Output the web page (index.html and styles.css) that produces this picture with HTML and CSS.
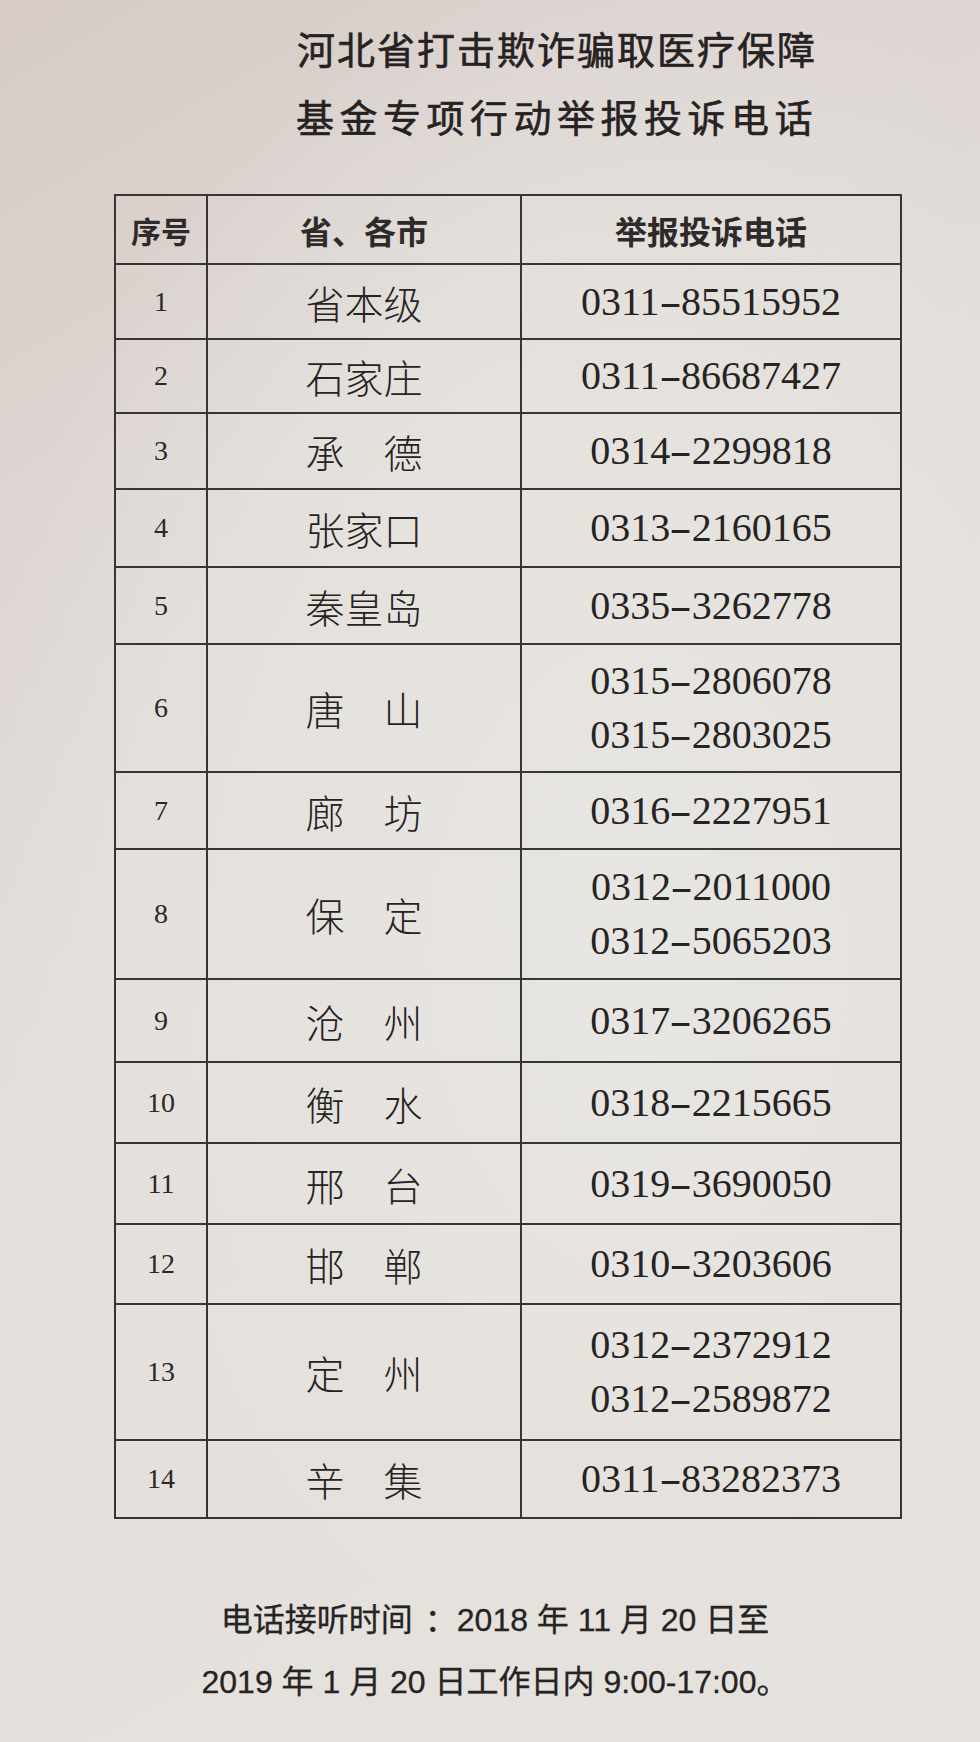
FILE: index.html
```html
<!DOCTYPE html>
<html lang="zh-CN">
<head>
<meta charset="utf-8">
<title>河北省打击欺诈骗取医疗保障基金专项行动举报投诉电话</title>
<link rel="stylesheet" href="styles.css">
</head>
<body>
<div class="page">
  <header class="title">
    <div class="title-line l1">河北省打击欺诈骗取医疗保障</div>
    <div class="title-line l2">基金专项行动举报投诉电话</div>
  </header>

  <table class="sheet">
    <colgroup>
      <col class="c-no">
      <col class="c-city">
      <col class="c-tel">
    </colgroup>
    <thead>
      <tr class="head">
        <th class="h-no">序号</th>
        <th>省、各市</th>
        <th>举报投诉电话</th>
      </tr>
    </thead>
    <tbody>
      <tr><td class="no">1</td><td class="city">省本级</td><td class="tel">0311<span class="dash">-</span>85515952</td></tr>
      <tr><td class="no">2</td><td class="city">石家庄</td><td class="tel">0311<span class="dash">-</span>86687427</td></tr>
      <tr><td class="no">3</td><td class="city">承　德</td><td class="tel">0314<span class="dash">-</span>2299818</td></tr>
      <tr><td class="no">4</td><td class="city">张家口</td><td class="tel">0313<span class="dash">-</span>2160165</td></tr>
      <tr><td class="no">5</td><td class="city">秦皇岛</td><td class="tel">0335<span class="dash">-</span>3262778</td></tr>
      <tr><td class="no">6</td><td class="city">唐　山</td><td class="tel">0315<span class="dash">-</span>2806078<br>0315<span class="dash">-</span>2803025</td></tr>
      <tr><td class="no">7</td><td class="city">廊　坊</td><td class="tel">0316<span class="dash">-</span>2227951</td></tr>
      <tr><td class="no">8</td><td class="city">保　定</td><td class="tel">0312<span class="dash">-</span>2011000<br>0312<span class="dash">-</span>5065203</td></tr>
      <tr><td class="no">9</td><td class="city">沧　州</td><td class="tel">0317<span class="dash">-</span>3206265</td></tr>
      <tr><td class="no">10</td><td class="city">衡　水</td><td class="tel">0318<span class="dash">-</span>2215665</td></tr>
      <tr><td class="no">11</td><td class="city">邢　台</td><td class="tel">0319<span class="dash">-</span>3690050</td></tr>
      <tr><td class="no">12</td><td class="city">邯　郸</td><td class="tel">0310<span class="dash">-</span>3203606</td></tr>
      <tr><td class="no">13</td><td class="city">定　州</td><td class="tel">0312<span class="dash">-</span>2372912<br>0312<span class="dash">-</span>2589872</td></tr>
      <tr><td class="no">14</td><td class="city">辛　集</td><td class="tel">0311<span class="dash">-</span>83282373</td></tr>
    </tbody>
  </table>

  <footer class="note">
    <p class="note-line">电话接听时间<span class="colon">：</span>2018 年 11 月 20 日至</p>
    <p class="note-line">2019 年 1 月 20 日工作日内 9:00-17:00。</p>
  </footer>
</div>
</body>
</html>
```

FILE: styles.css
```css
html, body {
  margin: 0;
  padding: 0;
}

body {
  width: 980px;
  min-height: 1742px;
  background:
    radial-gradient(ellipse at 65% 55%, #e8e6e2 0%, #e5e2de 45%, rgba(229,226,222,0) 75%),
    linear-gradient(150deg, #d6cbc7 0%, #ddd5d1 22%, #e3dfdb 50%, #e6e3df 100%);
  color: #2b2828;
  font-family: "Noto Sans CJK SC", sans-serif;
}

.page {
  display: flex;
  flex-direction: column;
  padding-top: 14px;
}

/* ---------- title ---------- */
.title {
  padding-left: 134px;
  text-align: center;
  font-family: "Noto Sans CJK SC", sans-serif;
  font-weight: 400;
  font-size: 38px;
  line-height: 68px;
  color: #262222;
  -webkit-text-stroke: 0.6px #262222;
}

.title-line.l1 {
  letter-spacing: 2px;
}

.title-line.l2 {
  letter-spacing: 5.5px;
}

/* ---------- table ---------- */
.sheet {
  margin-top: 44px;
  margin-left: 114px;
  width: 786px;
  table-layout: fixed;
  border-collapse: collapse;
  border: 2px solid #383535;
}

.c-no { width: 92px; }
.c-city { width: 314px; }
.c-tel { width: 380px; }

.sheet th,
.sheet td {
  border: 2px solid #383535;
  padding: 0;
  text-align: center;
  vertical-align: middle;
}

.sheet th {
  height: 67px;
  font-family: "Noto Sans CJK SC", sans-serif;
  font-weight: 700;
  font-size: 32px;
  color: #2e2a2a;
}

.sheet th.h-no {
  font-size: 30px;
}

.no {
  font-family: "Liberation Serif", serif;
  font-size: 28px;
  color: #2b2828;
}

.city {
  font-family: "Noto Sans CJK SC", sans-serif;
  font-weight: 300;
  font-size: 39px;
  color: #262323;
}

.tel {
  font-family: "Liberation Serif", serif;
  font-size: 40px;
  line-height: 54px;
  color: #262323;
}

.dash {
  display: inline-block;
  transform: scaleX(1.7);
  margin: 0 4px;
}

/* row heights follow the printed sheet */
tbody tr:nth-child(1) td { height: 73px; }
tbody tr:nth-child(2) td { height: 72px; }
tbody tr:nth-child(3) td { height: 74px; }
tbody tr:nth-child(4) td { height: 76px; }
tbody tr:nth-child(5) td { height: 75px; }
tbody tr:nth-child(6) td { height: 126px; }
tbody tr:nth-child(7) td { height: 75px; }
tbody tr:nth-child(8) td { height: 128px; }
tbody tr:nth-child(9) td { height: 81px; }
tbody tr:nth-child(10) td { height: 79px; }
tbody tr:nth-child(11) td { height: 79px; }
tbody tr:nth-child(12) td { height: 78px; }
tbody tr:nth-child(13) td { height: 134px; }
tbody tr:nth-child(14) td { height: 76px; }

/* ---------- footer note ---------- */
.note {
  margin-top: 70px;
  padding-left: 10px;
  text-align: center;
  font-family: "Liberation Sans", "Noto Sans CJK SC", sans-serif;
  font-size: 32px;
  line-height: 62px;
  color: #262323;
  -webkit-text-stroke: 0.3px #262323;
}

.note-line {
  margin: 0;
}

.colon {
  margin-left: 12px;
}
```
